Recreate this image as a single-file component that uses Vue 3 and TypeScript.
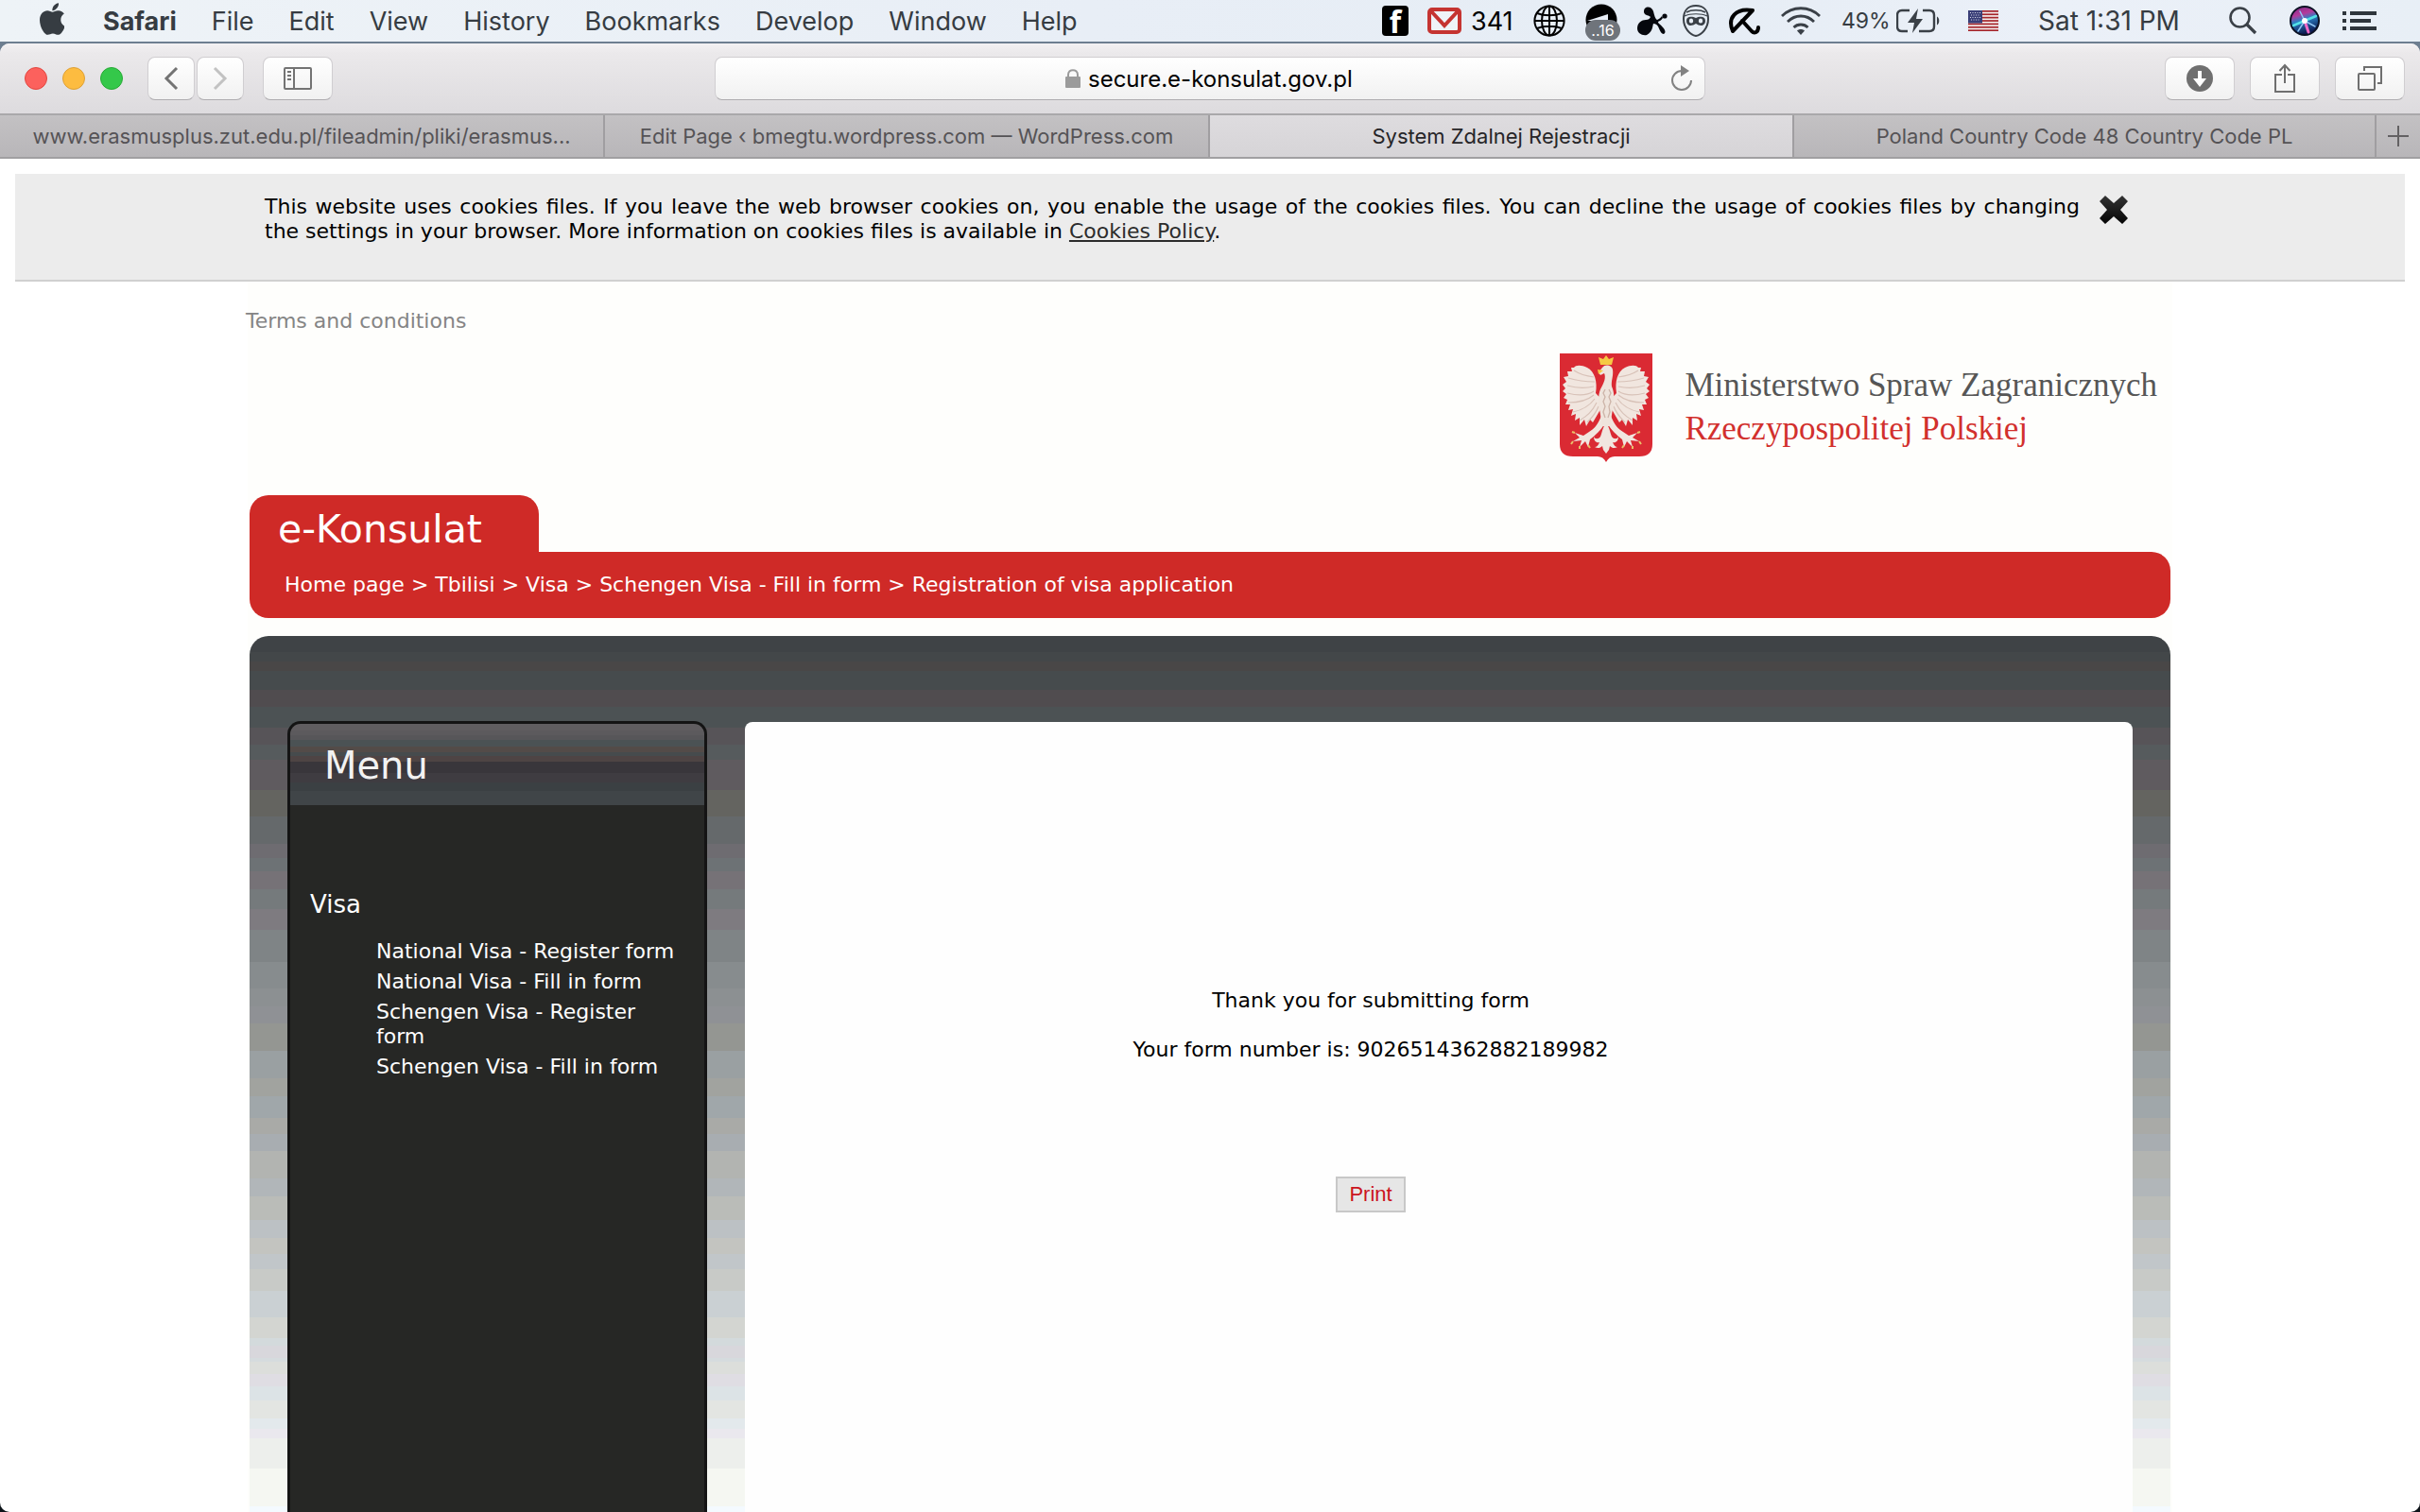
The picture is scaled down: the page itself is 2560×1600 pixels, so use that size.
<script setup lang="ts">
import { ref } from 'vue'

const menus: string[] = ['File', 'Edit', 'View', 'History', 'Bookmarks', 'Develop', 'Window', 'Help']

const tabs: { title: string; active?: boolean }[] = [
  { title: 'www.erasmusplus.zut.edu.pl/fileadmin/pliki/erasmus...' },
  { title: 'Edit Page ‹ bmegtu.wordpress.com — WordPress.com' },
  { title: 'System Zdalnej Rejestracji', active: true },
  { title: 'Poland Country Code 48 Country Code PL' },
]

const crumbs: string[] = ['Home page', 'Tbilisi', 'Visa', 'Schengen Visa - Fill in form', 'Registration of visa application']

const visaLinks: string[] = [
  'National Visa - Register form',
  'National Visa - Fill in form',
  'Schengen Visa - Register form',
  'Schengen Visa - Fill in form',
]

const address = ref('secure.e-konsulat.gov.pl')
const formNumber = '9026514362882189982'
const stripes: number[] = [0, 1, 2, 3, 4, 5, 6]
</script>

<template>
  <div class="desktop">
    <header class="menubar">
      <nav class="menus" aria-label="Application menu">
        <button type="button" class="apple" aria-label="Apple menu">
          <svg width="26" height="34" viewBox="4 30 367 452" preserveAspectRatio="none">
            <path fill="currentColor" d="M318.7 268.7c-.2-36.7 16.4-64.4 50-84.8-18.8-26.9-47.2-41.7-84.7-44.6-35.5-2.8-74.3 20.7-88.5 20.7-15 0-49.4-19.7-76.4-19.7C63.3 141.2 4 184.8 4 273.5q0 39.3 14.4 81.2c12.8 36.7 59 126.7 107.2 125.2 25.2-.6 43-17.9 75.8-17.9 31.8 0 48.3 17.9 76.4 17.9 48.6-.7 90.4-82.5 102.6-119.3-65.2-30.7-61.7-90-61.7-91.9zm-56.6-164.2c27.3-32.4 24.8-61.9 24-72.5-24.1 1.4-52 16.4-67.9 34.9-17.5 19.8-27.8 44.3-25.6 71.9 26.1 2 49.9-11.4 69.5-34.3z" />
          </svg>
        </button>
        <button type="button" class="app-name">Safari</button>
        <button v-for="m in menus" :key="m" type="button">{{ m }}</button>
      </nav>
      <div class="status">
        <span class="fb">f</span>
        <span class="mail">
          <svg width="36" height="28" viewBox="0 0 36 28">
            <rect x="2" y="2" width="32" height="24" rx="3" fill="#fff" fill-opacity=".35" stroke="#c53431" stroke-width="4" />
            <path d="M4 4l14 15L32 4" fill="none" stroke="#c53431" stroke-width="4" />
          </svg>
          341
        </span>
        <svg class="globe" width="34" height="34" viewBox="0 0 34 34" fill="none" stroke="#000" stroke-width="2">
          <circle cx="17" cy="17" r="15.6" />
          <ellipse cx="17" cy="17" rx="8" ry="15.6" />
          <path d="M17 1v32M1 17h32M4 9c7 3 19 3 26 0M4 25c7-3 19-3 26 0" />
        </svg>
        <span class="disk">
          <svg width="36" height="36" viewBox="0 0 36 36">
            <circle cx="17" cy="17" r="16.5" fill="#000" />
            <path d="M2 18l22-7v7z" fill="#e8eef6" />
          </svg>
          <span class="badge">..16</span>
        </span>
        <svg class="claw" width="32" height="32" viewBox="0 0 32 32" fill="#05070d">
          <path d="M8 3c3-3 8-1 9 3 1 4 2 8 4 9 3-1 4-3 5-4l1 2c-1 2-3 3-5 4 0 2 3 3 6 7 2 3 2 5 0 6-3 0-4-4-6-8-1-2-3-3-5-3-1 2 0 8-7 12C5 32 0 29 0 24c0-6 5-9 9-9 3 0 4-1 5-3-1-2-6-1-7-5 0-2 0-3 1-4z" />
          <circle cx="29" cy="11" r="2.6" />
        </svg>
        <svg class="mask" width="28" height="34" viewBox="0 0 28 34">
          <path d="M14 1C6 1 1 6 1 15c0 10 7 17 13 18 6-1 13-8 13-18C27 6 22 1 14 1z" fill="none" stroke="#3a4047" stroke-width="2" />
          <path d="M4 8c5-3 15-3 20 0" fill="none" stroke="#3a4047" stroke-width="1.5" />
          <path d="M2 12c6-3 18-3 24 0" fill="none" stroke="#3a4047" stroke-width="1.2" />
          <path d="M4 17c0-5 6-5 10-3 4-2 10-2 10 3 0 6-6 6-10 3-4 3-10 3-10-3z" fill="#3a4047" />
          <ellipse cx="9" cy="17" rx="2.2" ry="2.6" fill="#e8eef6" />
          <ellipse cx="19" cy="17" rx="2.2" ry="2.6" fill="#e8eef6" />
        </svg>
        <svg class="umbrella" width="34" height="30" viewBox="0 0 34 30" fill="none" stroke="#000" stroke-width="4" stroke-linecap="round" stroke-linejoin="round">
          <path d="M5 26C-1 12 8 1 26 4L5 26z" />
          <path d="M15 15l10 11c3 3 7 1 7-4" />
        </svg>
        <svg class="wifi" width="42" height="30" viewBox="0 0 42 30" fill="none" stroke="#3a4047" stroke-width="2.8">
          <path d="M1 10C12-1 30-1 41 10M7 16c8-8 20-8 28 0M13.500 22c4-4 11-4 15 0" />
          <path d="M21 30l-4-4.500c2-2 6-2 8 0z" fill="#3a4047" stroke="none" />
        </svg>
        <span class="percent">49%</span>
        <svg class="battery" width="46" height="28" viewBox="0 0 46 28">
          <path d="M14 3H6Q1 3 1 8v12q0 5 5 5h6" fill="none" stroke="#3a4047" stroke-width="2.400" />
          <path d="M28 3h7q5 0 5 5v12q0 5-5 5H24" fill="none" stroke="#3a4047" stroke-width="2.400" />
          <path d="M43 9.500c3 1 3 8 0 9z" fill="#3a4047" />
          <path d="M23 1L12 16h7l-2 11 11-15h-7z" fill="#3a4047" />
        </svg>
        <svg class="flag" width="32" height="22" viewBox="0 0 32 22">
          <rect width="32" height="22" fill="#f4eeee" />
          <rect v-for="n in stripes" :key="n" x="0" :y="n * 3.390" width="32" height="1.700" fill="#a5262c" />
          <rect width="15" height="13.500" fill="#3a3f78" />
          <path d="M2 2.500h12M3 5h10M2 7.500h12M3 10h10" stroke="#d8dae8" stroke-width="1" stroke-dasharray="1 1.500" />
        </svg>
        <span class="clock">Sat 1:31 PM</span>
        <svg class="search" width="30" height="30" viewBox="0 0 30 30" fill="none" stroke="#3a4047" stroke-width="2.600">
          <circle cx="11.500" cy="11.500" r="10" />
          <path d="M18.500 18.500l9.500 9.500" stroke-width="3.200" />
        </svg>
        <svg class="siri" width="32" height="32" viewBox="0 0 32 32">
          <defs>
            <linearGradient id="siri-glow" x1="0" y1="0" x2=".3" y2="1">
              <stop offset="0" stop-color="#7b2a84" />
              <stop offset=".35" stop-color="#b33a9b" />
              <stop offset=".55" stop-color="#2b7fc4" />
              <stop offset="1" stop-color="#0d1c52" />
            </linearGradient>
          </defs>
          <circle cx="16" cy="16" r="15" fill="url(#siri-glow)" stroke="#0b1224" stroke-width="2" />
          <path d="M16 16L4 21M16 16l12-5" stroke="#52e0e6" stroke-width="2.500" stroke-linecap="round" />
          <path d="M16 16l4 12" stroke="#f06ac8" stroke-width="3" stroke-linecap="round" />
          <path d="M16 16L11 6M16 16l11 6M16 16L9 27" stroke="#8fc7f5" stroke-width="1.500" stroke-linecap="round" />
          <circle cx="16" cy="16" r="3" fill="#fff" />
        </svg>
        <svg class="list" width="36" height="22" viewBox="0 0 36 22" fill="#2f363c">
          <path d="M0 1h4v4H0zM0 9h4v4H0zM0 17h4v4H0zM8 1h28v4H8zM8 9h22v4H8zM8 17h28v4H8z" />
        </svg>
      </div>
    </header>

    <div class="window">
      <div class="toolbar">
        <div class="tools">
          <div class="lights"><i class="red"></i><i class="yellow"></i><i class="green"></i></div>
          <div class="history">
            <button type="button" class="tool small" aria-label="Back">
              <svg width="16" height="26" viewBox="0 0 16 26" fill="none" stroke="#737373" stroke-width="3"><path d="M14 2L3 13l11 11" /></svg>
            </button>
            <button type="button" class="tool small" aria-label="Forward">
              <svg width="16" height="26" viewBox="0 0 16 26" fill="none" stroke="#c2c2c2" stroke-width="3"><path d="M2 2l11 11L2 24" /></svg>
            </button>
          </div>
          <button type="button" class="tool" aria-label="Sidebar">
            <svg width="30" height="24" viewBox="0 0 30 24" fill="none" stroke="#737373" stroke-width="2">
              <rect x="1" y="1" width="28" height="22" rx="1" />
              <path d="M11 1v22M4 5h4M4 9h4M4 13h4" />
            </svg>
          </button>
        </div>
        <div class="address">
          <label for="address" aria-label="Address">
            <svg width="16" height="20" viewBox="0 0 16 20">
              <rect y="8" width="16" height="12" rx="1" fill="#9b9b9b" />
              <path d="M3 9V6c0-6.500 10-6.500 10 0v3" fill="none" stroke="#9b9b9b" stroke-width="2" />
            </svg>
          </label>
          <input id="address" v-model="address" type="text" />
          <button type="button" class="reload" aria-label="Reload">
            <svg width="24" height="28" viewBox="0 0 24 28">
              <path d="M12 6a10 10 0 1 0 10 10" fill="none" stroke="#828282" stroke-width="2" />
              <path d="M11 0l9 6-9 6z" fill="#828282" />
            </svg>
          </button>
        </div>
        <div class="tools right">
          <button type="button" class="tool" aria-label="Downloads">
            <svg width="28" height="28" viewBox="0 0 28 28">
              <circle cx="14" cy="14" r="14" fill="#6f6f6f" />
              <path d="M12 6h4v8h5l-7 9-7-9h5z" fill="#fff" />
            </svg>
          </button>
          <button type="button" class="tool" aria-label="Share">
            <svg width="22" height="32" viewBox="0 0 22 32" fill="none" stroke="#6f6f6f" stroke-width="2">
              <path d="M8 12H1v18h20V12h-7M11 21V3M5.500 8L11 2l5.500 6" />
            </svg>
          </button>
          <button type="button" class="tool" aria-label="Show all tabs">
            <svg width="26" height="26" viewBox="0 0 26 26" fill="none" stroke="#6f6f6f" stroke-width="2">
              <rect x="1" y="8" width="17" height="17" rx="1" />
              <path d="M7 5V1h18v17h-4" />
            </svg>
          </button>
        </div>
      </div>

      <nav class="tabs" aria-label="Tabs">
        <button v-for="t in tabs" :key="t.title" type="button" :class="{ active: t.active }">{{ t.title }}</button>
        <button type="button" class="add" aria-label="New tab">
          <svg width="22" height="22" viewBox="0 0 22 22" stroke="#636163" stroke-width="2"><path d="M11 0v22M0 11h22" /></svg>
        </button>
      </nav>

      <div class="view">
        <section class="cookies">
          <div class="cookies-inner">
            <p>
              This website uses cookies files. If you leave the web browser cookies on, you enable the usage of the
              cookies files. You can decline the usage of cookies files by changing the&nbsp;settings in your browser.
              More information on cookies files is available in <a href="#">Cookies Policy</a>.
            </p>
            <button type="button" aria-label="Close">
              <svg width="32" height="32" viewBox="0 0 32 32">
                <defs>
                  <linearGradient id="cross" x1="0" y1="0" x2="0" y2="1">
                    <stop offset="0" stop-color="#333" />
                    <stop offset="1" stop-color="#050505" />
                  </linearGradient>
                </defs>
                <path d="M7 1l9 8 9-8 6 6-8 9 8 9-6 6-9-8-9 8-6-6 8-9-8-9z" fill="url(#cross)" />
              </svg>
            </button>
          </div>
        </section>

        <div class="page">
          <a class="terms" href="#">Terms and conditions</a>
          <div class="ministry">
            <svg class="shield" width="98" height="115" viewBox="0 0 98 115">
              <path d="M0 0h98v96q0 13-14 13H58q-6 0-9 6-3-6-9-6H14Q0 109 0 96z" fill="#da2a33" />
              <defs>
                <g id="half-eagle">
                  <path d="M38 42C40 30 37 19 29 15c-6-3-12-3-14 0l-3 0 1 4-5 0 1 5-5 1 3 5-4 3 3 4-3 3 4 3-3 4 4 2-2 5 5 0-2 6 5-1-2 7 5-2-1 7 5-3 0 8 5-6 2 7 4-7 3 3 7-12 6-8z" fill="#f1e6df" />
                  <path d="M36 40C30 44 20 45 8 42M36 44C29 50 20 52 9 52M37 48C31 56 24 60 14 62M39 52C34 62 29 66 21 71M41 56C38 64 34 68 29 73M36 35C28 37 18 37 8 34M37 30C28 30 19 29 9 26M36 25C28 24 21 22 15 18" fill="none" stroke="#d8c2b8" stroke-width="1.200" />
                  <path d="M44 66C40 76 36 80 31 83l-6 4-9-3 5 5-7 4 9-1-2 7 6-6 3 6 2-8c6-5 11-9 15-16z" fill="#f1e6df" />
                  <path d="M16 84l-3-1M14 93l-2 3M21 98v3M30 97l2 3" stroke="#e8c06a" stroke-width="2" />
                  <path d="M49 74c-4 5-4 9-6 14-2 3-6 3-7 0 0 5 3 7 6 6-1 3-3 5-5 5 3 2 6 1 8-1l1 4 3 4z" fill="#f1e6df" />
                </g>
              </defs>
              <use href="#half-eagle" />
              <use href="#half-eagle" transform="translate(98 0) scale(-1 1)" />
              <path d="M45 15c3-4 10-3 11 2 1 7-2 12-1 18 3 6 3 16 1 24l-3 18h-8l-3-18c-2-8-1-18 2-23 3-5 5-11 3-15l-4 2-2-3z" fill="#efe4dc" />
              <path d="M48 38l-2 4 2 4-2 5 2 5-2 6 2 6M52 38l2 4-2 4 2 5-2 5 1 6-2 6" fill="none" stroke="#cdb4a8" stroke-width="1.300" />
              <path d="M43 12l-2-8 5 2 3-4 3 4 5-2-2 8zM40 17l6 1-5 4z" fill="#f5c943" />
            </svg>
            <p class="ministry-name">Ministerstwo Spraw Zagranicznych<br /><strong>Rzeczypospolitej Polskiej</strong></p>
          </div>

          <header class="banner">
            <h1>e-Konsulat</h1>
            <nav aria-label="Breadcrumb">
              <template v-for="(c, i) in crumbs" :key="c"><span v-if="i"> &gt; </span><a href="#">{{ c }}</a></template>
            </nav>
          </header>

          <div class="frame">
            <aside class="sidebar">
              <h2>Menu</h2>
              <h3>Visa</h3>
              <ul>
                <li v-for="l in visaLinks" :key="l"><a href="#">{{ l }}</a></li>
              </ul>
            </aside>
            <main class="content">
              <p>Thank you for submitting form</p>
              <p>Your form number is: {{ formNumber }}</p>
              <button type="button">Print</button>
            </main>
          </div>
        </div>
      </div>
    </div>
  </div>
</template>

<style>
body {
  margin: 0;
  background: #0d1319;
}
</style>

<style scoped>
* {
  box-sizing: border-box;
}

button,
input {
  margin: 0;
  padding: 0;
  border: 0;
  background: none;
  color: inherit;
  font: inherit;
}

p,
h1,
h2,
h3,
ul {
  margin: 0;
  padding: 0;
  font-weight: normal;
  list-style: none;
}

a {
  color: inherit;
  text-decoration: none;
}

svg {
  display: block;
  flex: none;
}

.desktop {
  display: flex;
  flex-direction: column;
  min-height: 100vh;
  background: linear-gradient(#6d7e90 0, #6d7e90 60px, #0d1319 200px);
  font-family: Inter, "Liberation Sans", sans-serif;
}

.menubar {
  display: flex;
  justify-content: space-between;
  height: 44px;
  padding: 0 46px 0 42px;
  background: linear-gradient(90deg, #eef3f7, #e8eef6 45%, #e6edf5 70%, #ebf0f8 85%, #e8eff6);
  color: #363c42;
  font-size: 27px;
}

.menus,
.status {
  display: flex;
  align-items: center;
}

.menus {
  gap: 37px;
}

.apple {
  margin-right: 4px;
  padding-bottom: 4px;
}

.app-name {
  font-weight: 700;
}

.fb {
  width: 28px;
  height: 32px;
  margin-right: 20px;
  border-radius: 4px;
  background: #000;
  color: #fff;
  font: 700 32px/34px "Open Sans", sans-serif;
  text-align: center;
}

.mail {
  display: flex;
  align-items: center;
  gap: 10px;
  width: 92px;
  margin-right: 20px;
  color: #000;
  white-space: nowrap;
}

.globe {
  margin-right: 21px;
}

.disk {
  position: relative;
  margin-right: 19px;
}

.badge {
  position: absolute;
  left: 0;
  bottom: -3px;
  width: 37px;
  height: 22px;
  border-radius: 11px;
  background: #6f747b;
  color: #fff;
  font-size: 16px;
  line-height: 22px;
  text-align: center;
}

.claw {
  margin-right: 16px;
}

.mask {
  margin-right: 20px;
}

.umbrella {
  margin-right: 22px;
}

.wifi {
  margin-right: 22px;
}

.percent {
  width: 58px;
  font-size: 23px;
}

.battery {
  margin-right: 30px;
}

.flag {
  margin-right: 42px;
}

.clock {
  width: 202px;
  font-size: 28px;
  white-space: nowrap;
}

.search {
  margin-right: 34px;
}

.siri {
  margin-right: 24px;
}

.window {
  display: flex;
  flex: 1;
  flex-direction: column;
  margin-top: 2px;
  border-radius: 10px;
  background: #fff;
  overflow: hidden;
}

.toolbar {
  display: grid;
  grid-template-columns: 1fr 1048px 1fr;
  align-items: center;
  height: 76px;
  padding: 0 16px;
  border-bottom: 2px solid #a9a8aa;
  background: linear-gradient(#f3f1f3, #ebe9eb 10px, #dddbde);
}

.tools,
.lights,
.history {
  display: flex;
  align-items: center;
}

.right {
  justify-content: flex-end;
  gap: 16px;
}

.lights {
  gap: 16px;
  margin: 0 26px 0 10px;
}

.lights i {
  width: 24px;
  height: 24px;
  border: 1px solid #e2463f;
  border-radius: 50%;
  background: #fc615d;
}

.lights .yellow {
  border-color: #dea035;
  background: #fdbc40;
}

.lights .green {
  border-color: #27aa35;
  background: #34c84a;
}

.history {
  gap: 2px;
  margin-right: 20px;
}

.tool,
.address {
  display: flex;
  align-items: center;
  justify-content: center;
  height: 46px;
  border: 1px solid #d0ced1;
  border-bottom-color: #aeacaf;
  border-radius: 8px;
  background: linear-gradient(#fff, #f1f1f1);
}

.tool {
  width: 74px;
}

.small {
  width: 50px;
}

.address {
  position: relative;
  gap: 8px;
}

.address input {
  width: 282px;
  color: #000;
  font-size: 24px;
}

.reload {
  position: absolute;
  right: 12px;
}

.tabs {
  display: grid;
  grid-template-columns: 640fr 640fr 618fr 616fr 46px;
  height: 46px;
  border-bottom: 2px solid #a09fa1;
  background: linear-gradient(#c3c1c3, #b8b6b9);
  color: #555356;
  font-size: 22px;
}

.tabs button {
  border-right: 2px solid #a09ea1;
  white-space: nowrap;
}

.tabs .active {
  background: linear-gradient(#dedcdf, #d6d4d7);
  color: #262528;
}

.tabs .add {
  display: flex;
  align-items: center;
  justify-content: center;
  border-right: 0;
}

.view {
  display: flex;
  flex: 1;
  flex-direction: column;
  padding: 16px 16px 0;
  font-family: Verdana, "DejaVu Sans", sans-serif;
  font-size: 22px;
  line-height: 26px;
}

.cookies {
  padding: 22px 24px 38px;
  border-bottom: 2px solid #d0d0d0;
  background: #ececec;
  color: #000;
}

.cookies-inner {
  display: flex;
  align-items: flex-start;
  gap: 20px;
  max-width: 2000px;
  margin: 0 auto;
}

.cookies p {
  width: 1920px;
  text-align: justify;
}

.cookies a {
  color: #2c2c2c;
  text-decoration: underline;
}

.page {
  display: flex;
  flex: 1;
  flex-direction: column;
  width: 100%;
  max-width: 2040px;
  margin: 0 auto;
  padding: 29px 0 0;
  background: linear-gradient(#fefefc, #fefefc) center / calc(100% - 4px) 100% no-repeat;
}

.terms {
  align-self: flex-start;
  color: #858585;
}

.ministry {
  display: flex;
  justify-content: flex-end;
  gap: 34px;
  margin: 21px 4px 35px;
  padding-right: 14px;
}

.ministry-name {
  padding-top: 11px;
  color: #565656;
  font: 35px/46px "Liberation Serif", serif;
}

.ministry-name strong {
  color: #d2302d;
  font-weight: normal;
}

.banner {
  margin: 0 4px;
  color: #fff;
}

.banner h1 {
  width: 306px;
  height: 60px;
  padding: 12px 30px 0;
  border-radius: 20px 20px 0 0;
  background: #cf2a27;
  font-size: 41px;
  line-height: 48px;
}

.banner nav {
  padding: 22px 37px;
  border-radius: 0 20px 20px 20px;
  background: #cf2a27;
  white-space: pre;
}

.frame {
  display: grid;
  flex: 1;
  grid-template-columns: 444px 1fr;
  gap: 40px;
  margin: 19px 4px 0;
  padding: 90px 40px 0;
  border-radius: 20px 20px 0 0;
  background: linear-gradient(
    #3f4346 17px, #434749 17px 27px, #494747 27px 37px, #464b4d 37px 57px,
    #504c4f 57px 75px, #4c5254 75px 97px, #575458 97px 115px, #565b5d 115px 131px,
    #5f5b5f 131px 163px, #646460 163px 191px, #65696b 191px 220px, #6e6c71 220px 235px,
    #6d7275 235px 249px, #767277 249px 268px, #757a7c 268px 289px, #7e7b80 289px 311px,
    #7f8486 311px 345px, #878c8e 345px 373px, #8c9092 373px 392px, #8f9195 392px 410px,
    #949692 410px 439px, #9aa0a2 439px 468px, #a1a39f 468px 487px, #a0a7aa 487px 510px,
    #a9aaa7 510px 527px, #a8adb1 527px 545px, #b2b4b1 545px 574px, #b1b6b9 574px 593px,
    #babcb8 593px 618px, #bcc1c4 618px 637px, #c3c4c0 637px 654px, #c1c6c9 654px 670px,
    #c8cac7 670px 693px, #cad0d3 693px 721px, #d3d5d1 721px 743px, #d3dadc 743px 751px,
    #d8d7dc 751px 764px, #d5dbde 764px 768px, #dcdedb 768px 781px, #dfdde3 781px 794px,
    #dce3e6 794px 809px, #e3e5e2 809px 828px, #e3e9ec 828px 839px, #eae8ee 839px 849px,
    #edefec 849px 881px, #f5f7f2 881px 921px, #f4faff 921px
  );
}

.sidebar {
  border: 3px solid #141414;
  border-bottom: 0;
  border-radius: 14px 14px 0 0;
  background: #262725;
  color: #fff;
  overflow: hidden;
}

.sidebar h2 {
  padding: 21px 36px 19px;
  background: linear-gradient(
    #605d60 7px, #5c5a5d 7px 12px, #575659 12px 17px, #4b5254 17px 24px,
    #534b48 24px 30px, #464b4d 30px 34px, #4e4444 34px 40px, #39363b 40px 52px,
    #3f3c41 52px 62px, #3b4043 62px 71px, #404548 71px
  );
  color: #f2f2f2;
  font-size: 40px;
  line-height: 46px;
}

.sidebar h3 {
  padding: 90px 21px 22px;
  font-size: 26px;
  line-height: 30px;
}

.sidebar ul {
  display: grid;
  gap: 6px;
  padding: 0 20px 0 91px;
}

.content {
  display: flex;
  flex-direction: column;
  align-items: center;
  gap: 26px;
  margin-top: 1px;
  padding: 282px 144px 40px 0;
  border-radius: 8px 8px 0 0;
  background: #fefefe;
  color: #000;
}

.content button {
  width: 74px;
  height: 38px;
  margin-top: 95px;
  border: 2px solid #c8c8c8;
  background: #e6e6e6;
  color: #cb1420;
  font: 22px/26px "Liberation Sans", sans-serif;
}
</style>
